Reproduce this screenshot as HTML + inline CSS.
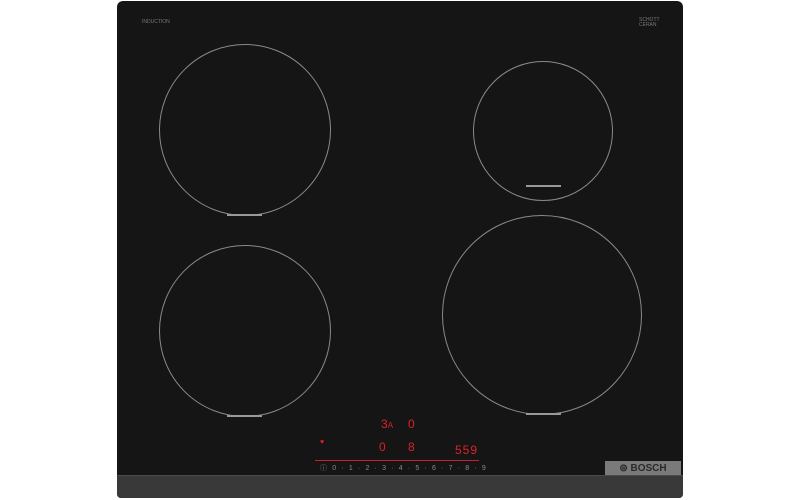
<!DOCTYPE html><html><head><style>
body{margin:0;background:#fff;width:800px;height:500px;overflow:hidden;position:relative;font-family:"Liberation Sans",sans-serif}
.hob{position:absolute;left:117px;top:1px;width:566px;height:497px;background:#151515;border-radius:6px 6px 4px 4px;overflow:hidden}
.strip{position:absolute;left:0;bottom:0;width:100%;height:22px;background:#393939;border-top:1px solid #4a4a4a}
.c{position:absolute;border:1px solid #8a8a8a;border-radius:50%;box-sizing:border-box}
.r{position:absolute;color:#e02028;font-size:12px}
</style></head><body>
<div class="hob">
<div style="position:absolute;left:25px;top:18px;font-size:5px;color:#777">INDUCTION</div>
<div style="position:absolute;left:522px;top:17px;font-size:5px;color:#777;line-height:5px">SCHOTT<br>CERAN</div>
<div class="c" style="left:42px;top:43px;width:172px;height:172px"></div>
<div class="c" style="left:42px;top:244px;width:172px;height:172px"></div>
<div class="c" style="left:356px;top:60px;width:140px;height:140px"></div>
<div class="c" style="left:325px;top:214px;width:200px;height:200px"></div>
<div style="position:absolute;left:110px;top:213px;width:35px;height:2px;background:#999"></div>
<div style="position:absolute;left:110px;top:414px;width:35px;height:2px;background:#999"></div>
<div style="position:absolute;left:409px;top:184px;width:35px;height:2px;background:#999"></div>
<div style="position:absolute;left:409px;top:412px;width:35px;height:2px;background:#999"></div>
<div class="r" style="left:264px;top:416px">3<span style="font-size:8px">A</span></div>
<div class="r" style="left:291px;top:416px">0</div>
<div class="r" style="left:262px;top:439px">0</div>
<div class="r" style="left:291px;top:439px">8</div>
<div class="r" style="left:338px;top:442px;letter-spacing:1px">559</div>
<div class="r" style="left:203px;top:438px;font-size:7px">♥</div>
<div style="position:absolute;left:198px;top:459px;width:164px;height:1px;background:#c8202a"></div>
<div style="position:absolute;left:203px;top:462px;font-size:7px;color:#888;letter-spacing:5.2px">ⓘ0·1·2·3·4·5·6·7·8·9</div>
<div style="position:absolute;left:488px;top:460px;width:76px;height:15px;background:#7a7a7a;color:#2a2a2a;font-weight:bold;font-size:10px;line-height:15px;text-align:center">⊜ BOSCH</div>
<div class="strip"></div>
</div>
</body></html>
